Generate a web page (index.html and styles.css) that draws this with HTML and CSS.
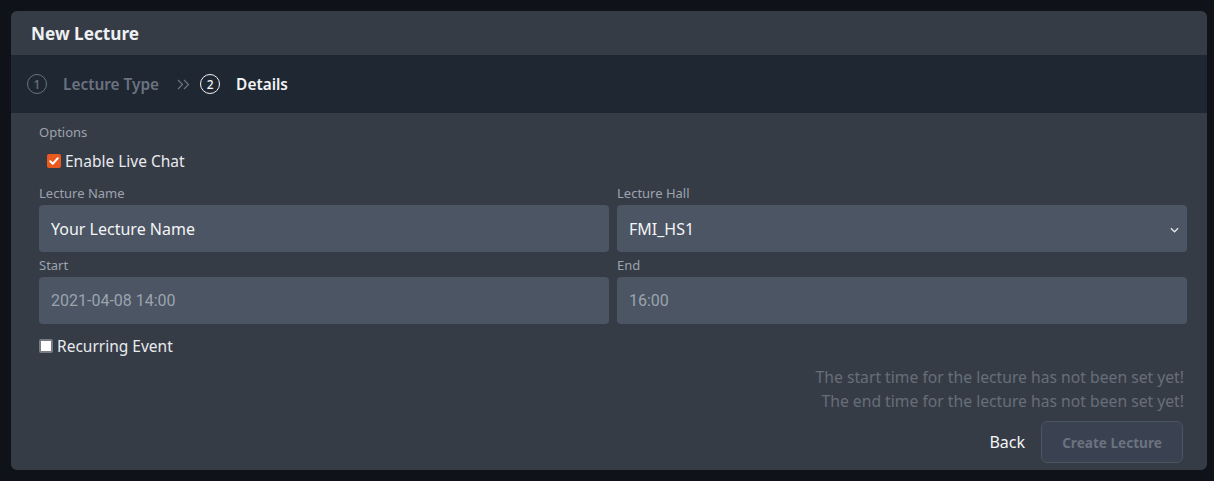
FILE: index.html
```html
<!DOCTYPE html>
<html>
<head>
<meta charset="utf-8">
<link rel="stylesheet" href="styles.css">
</head>
<body>
<div class="card">
  <div class="card-head">New Lecture</div>
  <div class="stepper">
    <span class="step-num">1</span>
    <span class="step-label">Lecture Type</span>
    <svg class="step-sep" viewBox="0 0 13 11" width="13" height="11"><path d="M1 1 L5.5 5.5 L1 10 M7 1 L11.5 5.5 L7 10" fill="none" stroke="#6b7280" stroke-width="1.2"/></svg>
    <span class="step-num active">2</span>
    <span class="step-label active">Details</span>
  </div>
  <div class="card-body">
    <div class="label">Options</div>
    <label class="check-row live">
      <span class="cb checked"><svg viewBox="0 0 14 14" width="14" height="14"><path d="M3.2 7.3 L5.8 9.8 L10.8 4.2" fill="none" stroke="#fff" stroke-width="2" stroke-linecap="round" stroke-linejoin="round"/></svg></span>
      <span>Enable Live Chat</span>
    </label>
    <div class="grid">
      <div class="field">
        <div class="label">Lecture Name</div>
        <div class="input">Your Lecture Name</div>
      </div>
      <div class="field">
        <div class="label">Lecture Hall</div>
        <div class="input select">FMI_HS1<svg class="chev" viewBox="0 0 10 6" width="9" height="6"><path d="M1 1 L5 5 L9 1" fill="none" stroke="#e5e7eb" stroke-width="1.4"/></svg></div>
      </div>
      <div class="field">
        <div class="label">Start</div>
        <div class="input muted narrow">2021-04-08 14:00</div>
      </div>
      <div class="field">
        <div class="label">End</div>
        <div class="input muted narrow">16:00</div>
      </div>
    </div>
    <label class="check-row recur">
      <span class="cb empty"></span>
      <span>Recurring Event</span>
    </label>
    <div class="errors">
      <div>The start time for the lecture has not been set yet!</div>
      <div>The end time for the lecture has not been set yet!</div>
    </div>
    <div class="actions">
      <span class="back">Back</span>
      <span class="create">Create Lecture</span>
    </div>
  </div>
</div>
</body>
</html>
```
FILE: styles.css
```css
* { box-sizing: border-box; }
html, body { margin: 0; }
body {
  background: #0f1319;
  font-family: "Noto Sans", "Open Sans", sans-serif;
  color: #e5e7eb;
  padding: 11px 7px 0 11px;
}
.card {
  background: #363c46;
  border-radius: 6px;
  overflow: hidden;
  height: 459px;
}
.card-head {
  height: 44px;
  padding: 0 20px;
  display: flex;
  align-items: center;
  font-weight: 700;
  font-size: 17.2px;
  color: #eef0f3;
  padding-top: 1px;
}
.stepper {
  height: 58px;
  background: #1f2733;
  display: flex;
  align-items: center;
  padding: 0 16px;
  font-size: 15.4px;
  font-weight: 600;
}
.step-num {
  width: 20px; height: 20px;
  border: 1px solid #6b7280;
  border-radius: 50%;
  display: flex; align-items: center; justify-content: center;
  font-size: 12px; font-weight: 500;
  color: #6b7280;
  margin-right: 16px;
}
.step-num.active { border-color: #f3f4f6; color: #f3f4f6; }
.step-label { color: #6b7280; }
.step-label.active { color: #f3f4f6; }
.step-sep {
  margin: 0 10px 0 18px;
}
.card-body {
  padding: 10px 20px 0 28px;
}
.label {
  font-size: 13px;
  color: #9ca3af;
  line-height: 18px;
}
.check-row {
  display: flex;
  align-items: center;
  gap: 4px;
  font-size: 15.5px;
  color: #e8eaee;
}
.check-row.live { padding-left: 8px; margin-top: 9px; height: 22px; }
.check-row.recur { margin-top: 11px; height: 22px; }
.cb {
  width: 14px; height: 14px;
  border-radius: 2px;
  display: inline-flex;
}
.cb.checked { background: #ea5a1f; }
.cb.empty { background: #fff; border: 2px solid #767b85; border-radius: 2px; }
.grid {
  margin-top: 12px;
  display: grid;
  grid-template-columns: 1fr 1fr;
  column-gap: 8px;
  row-gap: 4px;
}
.field .label { margin-bottom: 3px; }
.input {
  height: 47px;
  background: #4b5563;
  border-radius: 4px;
  display: flex;
  align-items: center;
  padding: 0 12px;
  font-size: 16px;
  color: #f3f4f6;
}
.input.muted { color: #9ca3af; }
.input.narrow { font-family: "Liberation Sans Narrow", "Roboto", sans-serif; font-size: 16px; }
.select { justify-content: space-between; padding-right: 8px; }
.chev { margin-top: 2px; }
.errors {
  margin-top: 8px;
  text-align: right;
  font-size: 15.7px;
  color: #676e79;
  line-height: 24px;
  padding-right: 3px;
}
.actions {
  margin-top: 8px;
  display: flex;
  justify-content: flex-end;
  align-items: center;
  gap: 16px;
  padding-right: 4px;
}
.back { font-size: 16px; color: #f3f4f6; }
.create {
  height: 42px;
  width: 142px;
  border: 1px solid #4b5563;
  border-radius: 6px;
  background: #3a4150;
  display: flex; align-items: center; justify-content: center;
  font-size: 13.6px; font-weight: 700;
  color: #6b7280;
}
```
